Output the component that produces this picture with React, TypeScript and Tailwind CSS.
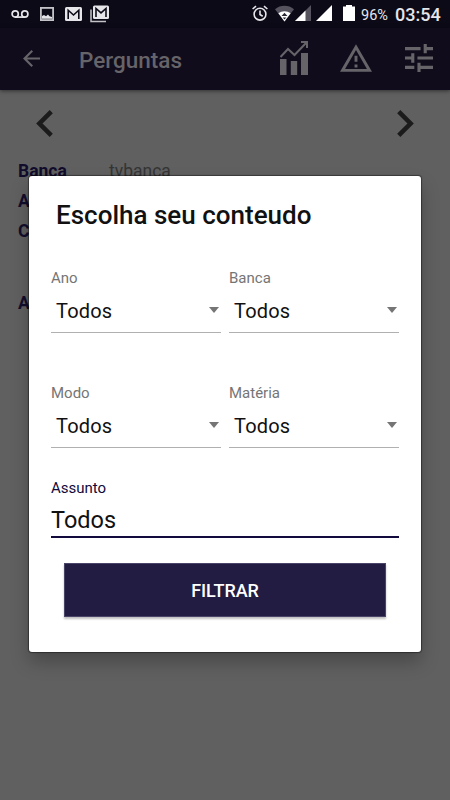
const filters = ['Ano', 'Banca', 'Modo', 'Matéria'];

function StatusBar() {
  return (
    <div className="flex h-7 items-start bg-[#0c0a17] text-[#e6e6ea]">
      <svg className="mt-[10px] ml-[11px] h-2 w-[18px]" viewBox="0 0 18 8" fill="none" stroke="currentColor" strokeWidth="1.7">
        <circle cx="4.2" cy="4" r="3.1" />
        <circle cx="13.8" cy="4" r="3.1" />
        <path d="M4.2 7.1h9.6" />
      </svg>
      <svg className="mt-[7px] ml-[11px] h-[14px] w-[14px]" viewBox="0 0 14 14">
        <rect x="0.9" y="0.9" width="12.2" height="12.2" fill="none" stroke="#c4c4c8" strokeWidth="1.8" />
        <path d="M2 11.8V9l2-1 2 1.2 2-1.7 1.5 1.8L12 10v1.8z" fill="currentColor" />
      </svg>
      <svg className="mt-[7px] ml-[11px] h-[14px] w-[17px]" viewBox="0 0 17 14">
        <rect width="17" height="14" rx="1.5" fill="currentColor" />
        <path d="M3.2 12V3.2L8.5 8l5.3-4.8V12" fill="none" stroke="#0c0a17" strokeWidth="1.6" />
      </svg>
      <svg className="mt-[5px] ml-2 h-[18px] w-5" viewBox="0 0 20 18">
        <path d="M1 4.5V16.5H16" fill="none" stroke="#c4c4c8" strokeWidth="1.5" />
        <rect x="3" y="0.5" width="16" height="13.5" rx="1.5" fill="currentColor" />
        <path d="M6 12V3.5l5 4.4 5-4.4V12" fill="none" stroke="#0c0a17" strokeWidth="1.6" />
      </svg>
      <svg className="mt-[5px] ml-[142px] h-4 w-4" viewBox="0 0 16 16" fill="none" stroke="currentColor" strokeWidth="1.6">
        <circle cx="8" cy="9.2" r="5.9" />
        <path d="M8 5.5v4l2.7 1.7M.6 4L4 1.1M15.4 4L12 1.1" />
      </svg>
      <svg className="mt-[5px] ml-[7px] h-[17px] w-[19px]" viewBox="0 0 19 17">
        <path d="M0 4.2C5.5-.3 13.5-.3 19 4.2L9.5 16.5z" fill="#56535f" />
        <path d="M3.4 8.3C7 5.6 12 5.6 15.6 8.3L9.5 16.5z" fill="#fff" />
        <path d="M9.5 7.8l3 3.2h-6zM7.7 12.6h3.6l-1.8 1.8z" fill="#2b2835" />
      </svg>
      <svg className="mt-[5px] ml-px h-4 w-4" viewBox="0 0 16 16">
        <path d="M16 0v16H0z" fill="#56535f" />
        <path d="M10.5 5.5V16H0z" fill="#fff" />
      </svg>
      <svg className="mt-[5px] ml-[5px] h-4 w-4" viewBox="0 0 16 16">
        <path d="M16 0v16H0z" fill="#fff" />
      </svg>
      <svg className="mt-[5px] ml-[11px] h-4 w-3" viewBox="0 0 12 16">
        <path d="M3 0h6v1.6h3V16H0V1.6h3z" fill="#fff" />
      </svg>
      <span className="mt-2 ml-[6px] w-[29px] text-[14.5px] leading-4">96%</span>
      <span className="mt-[5px] ml-[5px] text-[18px] leading-5 font-medium">03:54</span>
    </div>
  );
}

function Header() {
  return (
    <header className="relative flex h-[62px] items-center bg-[#100c1c] text-[#666469] shadow-[0_1px_4px_rgba(0,0,0,0.5)]">
      <svg className="-mt-px ml-[23px] h-[17px] w-[17px]" viewBox="4 4 16 16" fill="currentColor">
        <path d="M20 11H7.83l5.59-5.59L12 4l-8 8 8 8 1.41-1.41L7.83 13H20v-2z" />
      </svg>
      <h1 className="mt-px ml-[39px] w-[201px] text-[22.5px] leading-7 font-medium">Perguntas</h1>
      <svg className="-mt-[3px] h-[34px] w-7" viewBox="0 0 28 34" fill="currentColor">
        <path d="M0 18h6.5v16H0zM10.8 20h6.4v14h-6.4zM21 12h7v22h-7z" />
        <path d="M.5 16L8 8l6.5 6L26.5 1.5M21 1h6v6" fill="none" stroke="currentColor" strokeWidth="2" />
      </svg>
      <svg className="-mt-[3px] ml-8 h-7 w-8" viewBox="1 2 22 19" fill="currentColor">
        <path d="M12 5.99L19.53 19H4.47L12 5.99M12 2L1 21h22L12 2zm1 14h-2v2h2v-2zm0-6h-2v4h2v-4z" />
      </svg>
      <svg className="-mt-[2px] ml-[33px] h-7 w-7" viewBox="3 3 18 18" fill="currentColor">
        <path d="M3 17v2h6v-2H3zM3 5v2h10V5H3zm10 16v-2h8v-2h-8v-2h-2v6h2zM7 9v2H3v2h4v2h2V9H7zm14 4v-2H11v2h10zm-6-4h2V7h4V5h-4V3h-2v6z" />
      </svg>
    </header>
  );
}

function Question() {
  return (
    <main className="px-[18px] text-[17.5px] leading-[30px] font-bold text-[#120c2c]">
      <div className="flex justify-between px-[18px] pt-5 text-[#1b1b1b]">
        <svg className="h-[27px] w-[17px]" viewBox="8 6 7.41 12" fill="currentColor">
          <path d="M15.41 7.41L14 6l-6 6 6 6 1.41-1.41L10.83 12z" />
        </svg>
        <svg className="h-[27px] w-[17px]" viewBox="8.59 6 7.41 12" fill="currentColor">
          <path d="M10 6L8.59 7.41 13.17 12l-4.58 4.59L10 18l6-6z" />
        </svg>
      </div>
      <div className="mt-[19px] flex">
        <span className="w-[91px]">Banca</span>
        <span className="font-normal text-[#353535]">tvbanca</span>
      </div>
      <div>A</div>
      <div>C</div>
      <div className="mt-[42px]">A</div>
    </main>
  );
}

function Select({ label }: { label: string }) {
  return (
    <div className="h-[115px]">
      <div className="h-5 text-[15px] leading-[22px] text-[#757575]">{label}</div>
      <div className="flex h-[46px] items-center justify-between border-b border-[#b0b0b0] pr-[2px] pl-[5px] text-[20px] tracking-[0.2px] text-[#111]">
        <span className="pt-[2px]">Todos</span>
        <svg className="h-[6px] w-[10px]" viewBox="0 0 10 6">
          <path d="M0 0h10L5 6z" fill="#757575" />
        </svg>
      </div>
    </div>
  );
}

function FilterDialog() {
  return (
    <div className="absolute top-[176px] left-[29px] h-[476px] w-[392px] rounded-[3px] bg-white px-[22px] shadow-[0_0_1px_1px_rgba(0,0,0,0.4),0_10px_18px_rgba(0,0,0,0.25)]">
      <h2 className="pt-[23px] pl-[5px] text-[26px] leading-8 font-medium text-[#111]">Escolha seu conteudo</h2>
      <div className="mt-9 grid grid-cols-2 gap-x-2">
        {filters.map((label) => (
          <Select key={label} label={label} />
        ))}
      </div>
      <div className="-mt-5 h-5 text-[15px] leading-[22px] text-[#120a3c]">Assunto</div>
      <div className="h-[41px] border-b-2 border-[#120a3c] pt-[9px] text-[23.5px] leading-7 text-[#111]">Todos</div>
      <button className="mx-[13px] mt-[25px] flex h-[54px] w-[322px] items-center justify-center border border-[#494568] bg-[#231c42] pt-px text-[18px] font-medium tracking-[-0.1px] text-white shadow-[0_2px_2px_rgba(0,0,0,0.25)]">
        FILTRAR
      </button>
    </div>
  );
}

export default function App() {
  return (
    <div className="relative h-[800px] w-[450px] overflow-hidden bg-[#606060] font-['Roboto',sans-serif]">
      <StatusBar />
      <Header />
      <Question />
      <FilterDialog />
    </div>
  );
}
